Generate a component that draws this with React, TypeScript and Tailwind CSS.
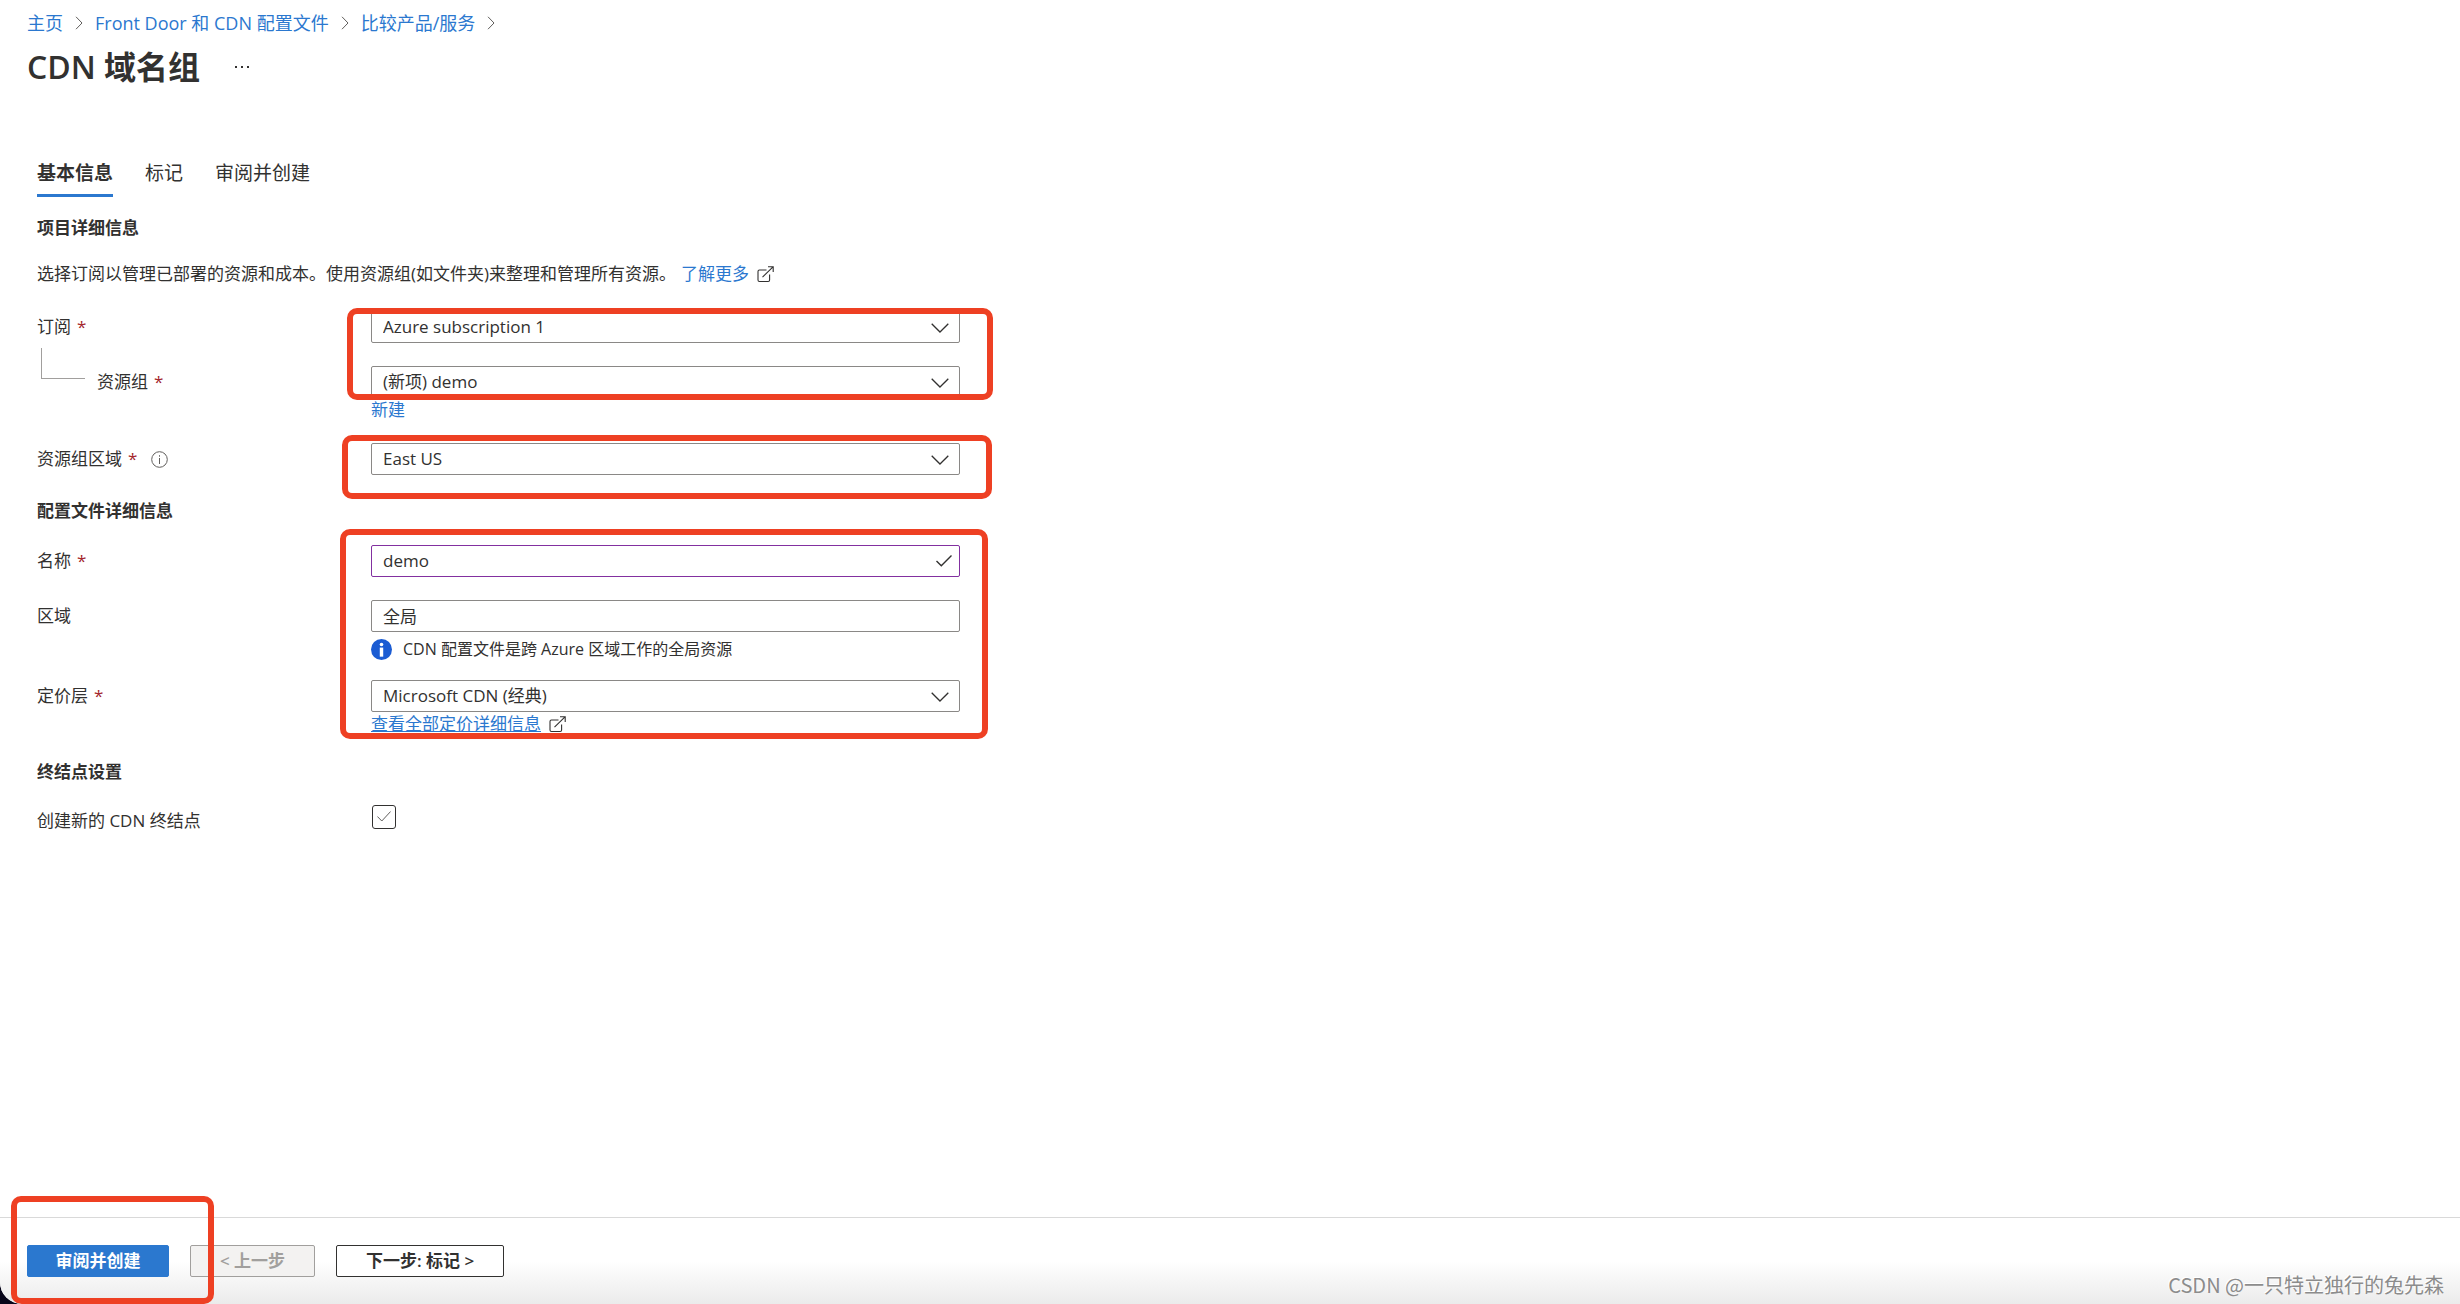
import type { ReactNode } from "react";

function Chevron() {
  return (
    <svg
      viewBox="0 0 18 10"
      className="pointer-events-none absolute right-[11px] top-3 h-[10px] w-[18px]"
      fill="none"
      stroke="#323130"
      strokeWidth="1.3"
    >
      <path d="M0.7 0.7 9 9 17.3 0.7" />
    </svg>
  );
}

function ExternalIcon() {
  return (
    <svg viewBox="0 0 17 17" className="h-[17px] w-[17px]" fill="none" stroke="#323130" strokeWidth="1.1">
      <path d="M9.5 4H2.4Q1 4 1 5.4v8.7q0 1.4 1.4 1.4h8.8q1.4 0 1.4-1.4V8.5M5.5 11.2 16 0.8M11 0.8h5.2v5.2" />
    </svg>
  );
}

function Separator() {
  return (
    <svg viewBox="0 0 8 14" className="h-[14px] w-2" fill="none" stroke="#605e5c" strokeWidth="1">
      <path d="M1 0.8 7 7 1 13.2" />
    </svg>
  );
}

function Highlight({ className }: { className: string }) {
  return (
    <div
      className={`pointer-events-none absolute rounded-[10px] border-[6px] border-[#ee4023] ${className}`}
    />
  );
}

function Row({ children }: { children: ReactNode }) {
  return <div className="grid grid-cols-[334px_minmax(0,1fr)] items-start">{children}</div>;
}

type LabelProps = { htmlFor: string; required?: boolean; children: ReactNode };

function Label({ htmlFor, required, children }: LabelProps) {
  return (
    <label htmlFor={htmlFor} className="flex h-8 items-center gap-[6px]">
      {children}
      {required && <span className="text-[#a4262c]">*</span>}
    </label>
  );
}

function Select({ id, value }: { id: string; value: string }) {
  return (
    <div className="relative">
      <select
        id={id}
        defaultValue={value}
        className="block h-8 w-full appearance-none rounded-[2px] border border-[#8a8886] bg-white pl-[11px] pr-10 leading-[30px]"
      >
        <option>{value}</option>
      </select>
      <Chevron />
    </div>
  );
}

const crumbs = ["主页", "Front Door 和 CDN 配置文件", "比较产品/服务"];

export default function App() {
  return (
    <div className="bg-[#08061a] font-['Open_Sans','Noto_Sans_CJK_SC',sans-serif] text-[17px] leading-6 text-[#323130]">
      <div className="flex min-h-screen flex-col overflow-hidden rounded-bl-[22px] bg-white">
        <header className="px-[27px] pt-[11px]">
          <nav className="flex items-center gap-3 text-lg leading-6">
            {crumbs.map((crumb) => (
              <div key={crumb} className="flex items-center gap-3">
                <a href="#" className="text-[#2b78cf]">{crumb}</a>
                <Separator />
              </div>
            ))}
          </nav>
          <div className="mt-3 flex items-center gap-[35px]">
            <h1 className="text-[32px] font-semibold leading-10">CDN 域名组</h1>
            <button type="button" aria-label="更多" className="flex h-6 items-center gap-1">
              <span className="size-[2px] bg-[#323130]" />
              <span className="size-[2px] bg-[#323130]" />
              <span className="size-[2px] bg-[#323130]" />
            </button>
          </div>
        </header>

        <main className="flex-1 px-[37px] pt-[74px]">
          <div role="tablist" className="flex gap-8 text-[19px] leading-6">
            <button type="button" role="tab" aria-selected="true" className="border-b-[3px] border-[#2b78cf] pb-[9px] font-semibold">
              基本信息
            </button>
            <button type="button" role="tab" aria-selected="false" className="border-b-[3px] border-transparent pb-[9px]">
              标记
            </button>
            <button type="button" role="tab" aria-selected="false" className="border-b-[3px] border-transparent pb-[9px]">
              审阅并创建
            </button>
          </div>

          <h2 className="mt-[19px] font-semibold">项目详细信息</h2>
          <p className="mt-[22px] flex items-center">
            选择订阅以管理已部署的资源和成本。使用资源组(如文件夹)来整理和管理所有资源。
            <a href="#" className="ml-[5px] flex items-center gap-2 text-[#2b78cf]">
              了解更多
              <ExternalIcon />
            </a>
          </p>

          <form className="max-w-[923px]">
            <div className="relative mt-[25px]">
              <Row>
                <Label htmlFor="subscription" required>订阅</Label>
                <Select id="subscription" value="Azure subscription 1" />
              </Row>
              <div className="mt-[23px]">
                <Row>
                  <div className="flex items-start">
                    <div className="-mt-[18px] ml-1 mr-3 h-[31px] w-11 border-b border-l border-[#a19f9d]" />
                    <Label htmlFor="group" required>资源组</Label>
                  </div>
                  <Select id="group" value="(新项) demo" />
                </Row>
              </div>
              <Highlight className="-bottom-[2px] -right-[33px] -top-[3px] left-[310px]" />
            </div>
            <a href="#" className="ml-[334px] inline-block text-[#2b78cf]">新建</a>

            <div className="relative mt-[21px]">
              <Row>
                <div className="flex items-center gap-[14px]">
                  <Label htmlFor="location" required>资源组区域</Label>
                  <svg viewBox="0 0 17 17" className="h-[17px] w-[17px]" fill="none" stroke="#605e5c">
                    <circle cx="8.5" cy="8.5" r="7.8" />
                    <path d="M8.5 7v6M8.5 4.2v1.5" />
                  </svg>
                </div>
                <Select id="location" value="East US" />
              </Row>
              <Highlight className="-bottom-6 -right-8 -top-2 left-[305px]" />
            </div>

            <h2 className="mt-6 font-semibold">配置文件详细信息</h2>

            <div className="relative mt-[22px]">
              <Row>
                <Label htmlFor="name" required>名称</Label>
                <div className="relative">
                  <input
                    id="name"
                    defaultValue="demo"
                    className="block h-8 w-full rounded-[2px] border border-[#8230a0] pb-[2px] pl-[11px] pr-10"
                  />
                  <svg
                    viewBox="0 0 16 12"
                    className="pointer-events-none absolute right-2 top-[10px] h-3 w-4"
                    fill="none"
                    stroke="#323130"
                    strokeWidth="1.4"
                  >
                    <path d="M0.5 6 5.3 10.8 15.5 0.6" />
                  </svg>
                </div>
              </Row>
              <div className="mt-[23px]">
                <Row>
                  <Label htmlFor="region">区域</Label>
                  <div>
                    <input
                      id="region"
                      readOnly
                      defaultValue="全局"
                      className="block h-8 w-full rounded-[2px] border border-[#8a8886] px-[11px] pb-[2px]"
                    />
                    <p className="mt-[5px] flex items-center gap-[11px] text-base leading-6">
                      <svg viewBox="0 0 22 22" className="size-[21px]">
                        <circle cx="11" cy="11" r="11" fill="#1b5cd3" />
                        <circle cx="11" cy="5.8" r="1.9" fill="#fff" />
                        <path d="M9.2 9h3.6v9.5H9.2z" fill="#fff" />
                      </svg>
                      CDN 配置文件是跨 Azure 区域工作的全局资源
                    </p>
                  </div>
                </Row>
              </div>
              <div className="mt-[19px]">
                <Row>
                  <Label htmlFor="tier" required>定价层</Label>
                  <div>
                    <Select id="tier" value="Microsoft CDN (经典)" />
                    <a href="#" className="flex w-fit items-center gap-2 text-[#2b78cf]">
                      <span className="underline">查看全部定价详细信息</span>
                      <ExternalIcon />
                    </a>
                  </div>
                </Row>
              </div>
              <Highlight className="-bottom-[3px] -right-7 -top-4 left-[303px]" />
            </div>

            <h2 className="mt-6 font-semibold">终结点设置</h2>
            <div className="mt-[21px]">
              <Row>
                <Label htmlFor="endpoint">创建新的 CDN 终结点</Label>
                <div className="relative ml-px size-6">
                  <input
                    id="endpoint"
                    type="checkbox"
                    defaultChecked
                    className="block size-6 appearance-none rounded-[3px] border border-[#323130]"
                  />
                  <svg
                    viewBox="0 0 14 11"
                    className="pointer-events-none absolute left-[5px] top-[6px] h-[11px] w-[14px]"
                    fill="none"
                    stroke="#605e5c"
                    strokeWidth="1"
                  >
                    <path d="M0.4 5.5 4.8 10 13.6 0.5" />
                  </svg>
                </div>
              </Row>
            </div>
          </form>
        </main>

        <footer className="relative border-t border-[#d9d9d9] bg-linear-to-b from-white from-50% to-[#ebebeb] px-[27px] pb-[27px] pt-[27px]">
          <div className="flex gap-[21px] leading-[30px]">
            <button type="button" className="w-[142px] rounded-[2px] border border-[#2b78cf] bg-[#2b78cf] font-semibold text-white">
              审阅并创建
            </button>
            <button type="button" disabled className="w-[125px] rounded-[2px] border border-[#a19f9d] bg-[#f3f2f1] font-semibold text-[#a19f9d]">
              &lt; 上一步
            </button>
            <button type="button" className="w-[168px] rounded-[2px] border border-[#323130] bg-white font-semibold">
              下一步: 标记 &gt;
            </button>
          </div>
          <Highlight className="-top-[22px] bottom-0 left-[11px] w-[203px]" />
          <p className="absolute bottom-[7px] right-4 font-['Noto_Sans_CJK_SC',sans-serif] text-xl leading-6 text-[#8c8c8c] [text-shadow:-1px_-1px_0_#fff]">
            CSDN @一只特立独行的兔先森
          </p>
        </footer>
      </div>
    </div>
  );
}
